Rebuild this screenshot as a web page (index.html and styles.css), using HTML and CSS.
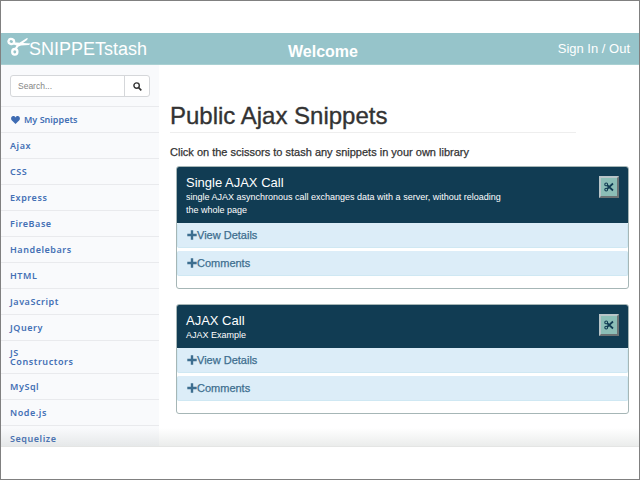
FILE: index.html
```html
<!DOCTYPE html>
<html lang="en">
<head>
<meta charset="utf-8">
<title>SNIPPETstash</title>
<link rel="stylesheet" href="styles.css">
</head>
<body>
<svg width="0" height="0" class="defs">
  <symbol id="cut" viewBox="0 0 10 10">
    <path d="M3 3 9 8.5M3 7 9 1.5" stroke="currentColor" stroke-width="1.7" fill="none"/>
    <circle cx="2.2" cy="2.4" r="1.4" stroke="currentColor" stroke-width="1.1" fill="none"/>
    <circle cx="2.2" cy="7.6" r="1.4" stroke="currentColor" stroke-width="1.1" fill="none"/>
  </symbol>
  <symbol id="plus" viewBox="0 0 10 10">
    <path d="M5 .3v9.4M.3 5h9.4" stroke="currentColor" stroke-width="2.4"/>
  </symbol>
</svg>
<div class="frame">
  <div class="window">
    <header class="topbar">
      <div class="brand">
        <svg class="logo" viewBox="0 0 24 20">
          <ellipse cx="4.3" cy="4.5" rx="2.8" ry="2.5" stroke="#fff" stroke-width="2.3" fill="none" transform="rotate(20 4.3 4.5)"/>
          <ellipse cx="7.8" cy="14.8" rx="2.6" ry="2.8" stroke="#fff" stroke-width="2.3" fill="none"/>
          <path d="M6 5.3 13 5.8 23.5 6.4 22 8 14 8.6 11.5 9.4 9 12.8 7.2 12.2 9.5 8.6 6 7.2zM12.5 5.8 19.5 1.2 21 1.2 20 3 15 6.8z" fill="#fff"/>
        </svg>
        <span class="name">SNIPPETstash</span>
      </div>
      <div class="welcome">Welcome</div>
      <div class="sign">Sign In / Out</div>
    </header>
    <div class="body">
      <nav class="side">
        <div class="searchrow">
          <div class="search">
            <span class="ph">Search...</span>
            <span class="go"><svg width="9" height="9" viewBox="0 0 9 9"><circle cx="3.6" cy="3.6" r="2.7" fill="none" stroke="#333" stroke-width="1.4"/><path d="M5.5 5.5 8.3 8.3" stroke="#333" stroke-width="1.7"/></svg></span>
          </div>
        </div>
        <a class="item mine"><svg width="9" height="8" viewBox="0 0 9 8"><path d="M4.5 8 .7 4.2C-.6 2.5.3.2 2.2.1c1 0 1.800.5 2.300 1.400C5 .6 5.800.1 6.800.1c1.900.1 2.800 2.400 1.500 4.100z" fill="#3f6cb3"/></svg><span>My Snippets</span></a>
        <a class="item">Ajax</a>
        <a class="item">CSS</a>
        <a class="item">Express</a>
        <a class="item">FireBase</a>
        <a class="item">Handelebars</a>
        <a class="item">HTML</a>
        <a class="item">JavaScript</a>
        <a class="item">JQuery</a>
        <a class="item two">JS<br>Constructors</a>
        <a class="item">MySql</a>
        <a class="item">Node.js</a>
        <a class="item">Sequelize</a>
      </nav>
      <main class="main">
        <h1>Public Ajax Snippets</h1>
        <p class="hint">Click on the scissors to stash any snippets in your own library</p>
        <section class="card">
          <div class="head">
            <div class="txt"><h2>Single AJAX Call</h2><p>single AJAX asynchronous call exchanges data with a server, without reloading<br>the whole page</p></div>
            <button class="cut"><svg width="10" height="10"><use href="#cut"/></svg></button>
          </div>
          <div class="row"><svg width="10" height="10"><use href="#plus"/></svg><span class="d">View Details</span></div>
          <div class="row"><svg width="10" height="10"><use href="#plus"/></svg><span class="c">Comments</span></div>
        </section>
        <section class="card short">
          <div class="head">
            <div class="txt"><h2>AJAX Call</h2><p>AJAX Example</p></div>
            <button class="cut"><svg width="10" height="10"><use href="#cut"/></svg></button>
          </div>
          <div class="row"><svg width="10" height="10"><use href="#plus"/></svg><span class="d">View Details</span></div>
          <div class="row"><svg width="10" height="10"><use href="#plus"/></svg><span class="c">Comments</span></div>
        </section>
      </main>
    </div>
    <div class="fade"></div>
  </div>
</div>
</body>
</html>
```
FILE: styles.css
```css
* { box-sizing: border-box; }
body { margin: 0; background: #fff; font-family: "Liberation Sans", Arial, sans-serif; color: #333; }
h1, h2, p { margin: 0; font-weight: normal; }
svg { display: block; flex: none; }
.defs { position: absolute; }
.frame { width: 640px; height: 480px; border: 1px solid #808080; padding: 32px 0; overflow: hidden; }
.window { position: relative; height: 414px; margin: 0 -1px; border-left: 1px solid #50484f; border-right: 1px solid #eee; overflow: hidden; }
.topbar { height: 32px; background: #96c4ca; border-bottom: 1px solid #a9d0d2; color: #fff; display: grid; grid-template-columns: 1fr auto 1fr; }
.brand { display: flex; padding-left: 6px; }
.logo { width: 24px; height: 20px; margin-top: 4px; }
.name { font-size: 18px; line-height: 33px; margin-left: -2px; white-space: nowrap; }
.welcome { font-size: 16px; line-height: 37px; font-weight: bold; padding-left: 6px; }
.sign { font-size: 13px; line-height: 31px; text-align: right; padding-right: 9px; }
.body { display: flex; height: 382px; overflow: hidden; }
.side { width: 158px; flex: none; background: #f9fafc; }
.searchrow { height: 41px; padding: 10px 9px 0; }
.search { width: 140px; height: 22px; border: 1px solid #d5d7da; border-radius: 3px; background: #fff; display: flex; }
.ph { flex: 1; font-size: 8.5px; line-height: 20px; padding-left: 7px; color: #858585; }
.go { width: 25px; border-left: 1px solid #d5d7da; display: grid; place-items: center; }
.item { display: flex; align-items: center; height: 26px; border-top: 1px solid #e9eaed; padding-left: 9px; font: 600 9px/9px "Noto Sans", sans-serif; letter-spacing: .55px; color: #4470b5; }
.item.mine { letter-spacing: 0; gap: 4px; padding-left: 10px; }
.item.two { display: block; height: 33px; padding-top: 7px; }
.main { flex: 1; padding: 37px 10px 0 11px; }
h1 { font-size: 24px; line-height: 28px; height: 31px; width: 406px; border-bottom: 1px solid #eee; -webkit-text-stroke: .35px #333; }
.hint { font-size: 11px; line-height: 13px; margin-top: 13px; -webkit-text-stroke: .25px #333; white-space: nowrap; }
.card { height: 123px; margin: 7px 0 0 6px; border: 1px solid #a6b6b6; border-radius: 3px; overflow: hidden; }
.card.short { height: 110px; margin-top: 15px; }
.head { height: 56px; background: #113c53; color: #fff; display: flex; justify-content: space-between; padding: 8px 9px 0; }
.short .head { height: 43px; }
h2 { font-size: 13px; line-height: 15px; }
.head p { font-size: 9px; line-height: 13px; margin-top: 1px; white-space: nowrap; }
.cut { width: 20px; height: 22px; margin-top: 1px; padding: 0; border: 2px outset #b9c5c8; background: #8cbeb7; color: #113c53; display: grid; place-items: center; }
.row { height: 25px; margin-bottom: 3px; display: flex; align-items: center; padding-left: 9px; background: #dcedf8; border: 1px solid #cfe8f3; border-width: 0 1px 1px; border-radius: 2px; color: #3d6e8f; font-size: 11px; -webkit-text-stroke: .25px #3d6e8f; }
.fade { position: absolute; left: 0; right: 0; bottom: 0; height: 19px; background: linear-gradient(rgba(130,140,135,0), rgba(130,140,135,.16)); border-bottom: 1px solid #e4e5e4; }
```
